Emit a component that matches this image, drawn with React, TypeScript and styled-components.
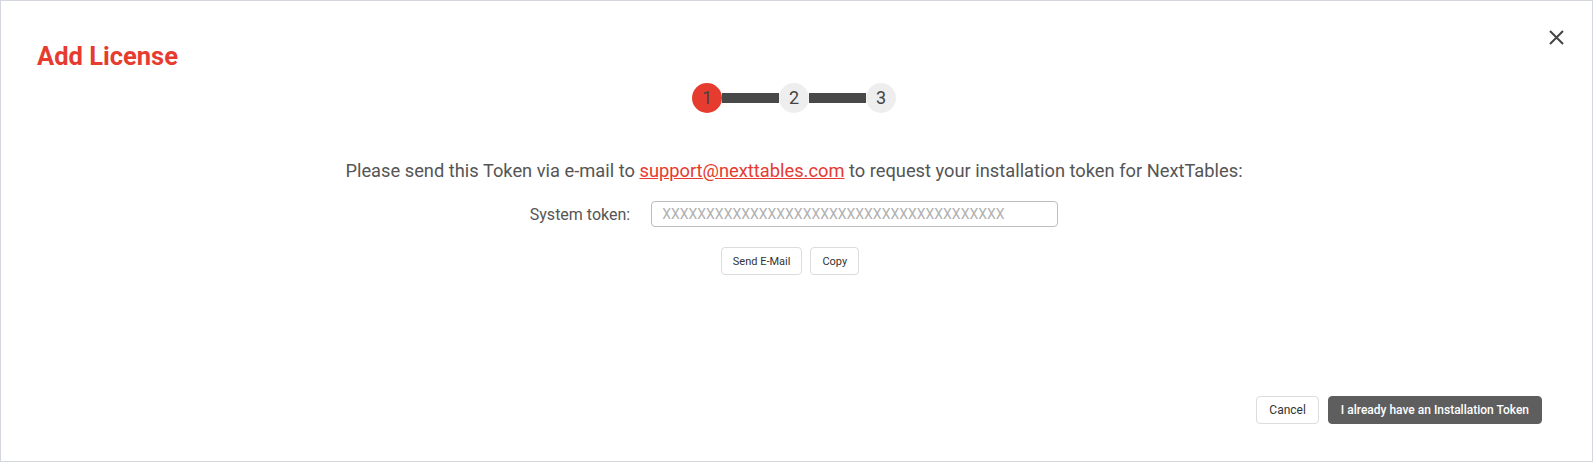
import React from "react";
import styled, { createGlobalStyle } from "styled-components";

const GlobalStyle = createGlobalStyle`
  html, body {
    margin: 0;
    padding: 0;
    background: #ffffff;
  }
  body {
    font-family: Roboto, "Liberation Sans", Arial, sans-serif;
  }
  * { box-sizing: border-box; }
`;

const Dialog = styled.div`
  width: 1593px;
  height: 462px;
  border: 1px solid #d3d6dc;
  background: #fff;
  display: flex;
  flex-direction: column;
`;

const Header = styled.div`
  display: flex;
  justify-content: space-between;
  align-items: flex-start;
  padding: 0 22px 0 36px;
`;

const Title = styled.h1`
  margin: 41px 0 0 0;
  font-family: Roboto, "Liberation Sans", Arial, sans-serif;
  font-size: 25.5px;
  line-height: 29px;
  font-weight: 700;
  color: #e63c2f;
`;

const CloseButton = styled.button`
  margin-top: 22px;
  width: 28px;
  height: 28px;
  padding: 0;
  border: none;
  background: transparent;
  display: flex;
  align-items: center;
  justify-content: center;
  cursor: pointer;
`;

const Body = styled.div`
  display: flex;
  flex-direction: column;
  align-items: center;
  padding-right: 5px;
`;

const Stepper = styled.div`
  display: flex;
  align-items: center;
  margin-top: 12px;
`;

const StepCircle = styled.div<{ $active?: boolean }>`
  width: 30px;
  height: 30px;
  border-radius: 50%;
  background: ${(p) => (p.$active ? "#e63c2f" : "#eeeeee")};
  color: #444;
  display: flex;
  align-items: center;
  justify-content: center;
  font-size: 18px;
  line-height: 1;
  font-weight: 400;
`;

const Connector = styled.div`
  width: 57px;
  height: 10px;
  background: #484848;
  margin-top: -1px;
`;

const Message = styled.p`
  margin: 47px 0 0 0;
  font-size: 18.3px;
  line-height: 21px;
  color: #555;
`;

const MailLink = styled.a`
  color: #e53b30;
  text-decoration: underline;
`;

const TokenRow = styled.div`
  display: flex;
  align-items: center;
  gap: 21px;
  margin-top: 20px;
`;

const Label = styled.label`
  font-size: 16px;
  color: #555;
`;

const TokenInput = styled.input`
  width: 407px;
  height: 26px;
  border: 1px solid #bdbdbd;
  border-radius: 4px;
  padding: 0 10px;
  font-family: Roboto, "Liberation Sans", Arial, sans-serif;
  font-size: 14px;
  color: #444;
  &::placeholder {
    color: #b0b0b0;
  }
`;

const ActionRow = styled.div`
  display: flex;
  gap: 8px;
  margin-top: 20px;
  margin-left: -8px;
`;

const SmallButton = styled.button`
  height: 28px;
  padding: 0 11px;
  background: #fff;
  border: 1px solid #dcdcdc;
  border-radius: 4px;
  font-family: Roboto, "Liberation Sans", Arial, sans-serif;
  font-size: 11px;
  color: #333;
  cursor: pointer;
`;

const Footer = styled.div`
  margin-top: auto;
  display: flex;
  justify-content: flex-end;
  gap: 9px;
  padding: 0 50px 37px 0;
`;

const FooterButton = styled.button<{ $primary?: boolean }>`
  height: 28px;
  padding: 0 12px;
  border-radius: 4px;
  font-family: Roboto, "Liberation Sans", Arial, sans-serif;
  font-size: 12px;
  font-weight: ${(p) => (p.$primary ? 500 : 400)};
  background: ${(p) => (p.$primary ? "#5e5e5e" : "#fff")};
  color: ${(p) => (p.$primary ? "#fff" : "#333")};
  border: 1px solid ${(p) => (p.$primary ? "#5e5e5e" : "#dcdcdc")};
  cursor: pointer;
`;

const CloseIcon = () => (
  <svg width="15" height="15" viewBox="0 0 15 15" aria-hidden="true">
    <path d="M1 1 L14 14 M14 1 L1 14" stroke="#444" strokeWidth="2" fill="none" />
  </svg>
);

export default function App() {
  return (
    <>
      <GlobalStyle />
      <Dialog>
        <Header>
          <Title>Add License</Title>
          <CloseButton aria-label="Close">
            <CloseIcon />
          </CloseButton>
        </Header>
        <Body>
          <Stepper>
            <StepCircle $active>1</StepCircle>
            <Connector />
            <StepCircle>2</StepCircle>
            <Connector />
            <StepCircle>3</StepCircle>
          </Stepper>
          <Message>
            Please send this Token via e-mail to{" "}
            <MailLink href="#">support@nexttables.com</MailLink> to request your
            installation token for NextTables:
          </Message>
          <TokenRow>
            <Label>System token:</Label>
            <TokenInput placeholder={"X".repeat(39)} readOnly />
          </TokenRow>
          <ActionRow>
            <SmallButton>Send E-Mail</SmallButton>
            <SmallButton>Copy</SmallButton>
          </ActionRow>
        </Body>
        <Footer>
          <FooterButton>Cancel</FooterButton>
          <FooterButton $primary>I already have an Installation Token</FooterButton>
        </Footer>
      </Dialog>
    </>
  );
}
